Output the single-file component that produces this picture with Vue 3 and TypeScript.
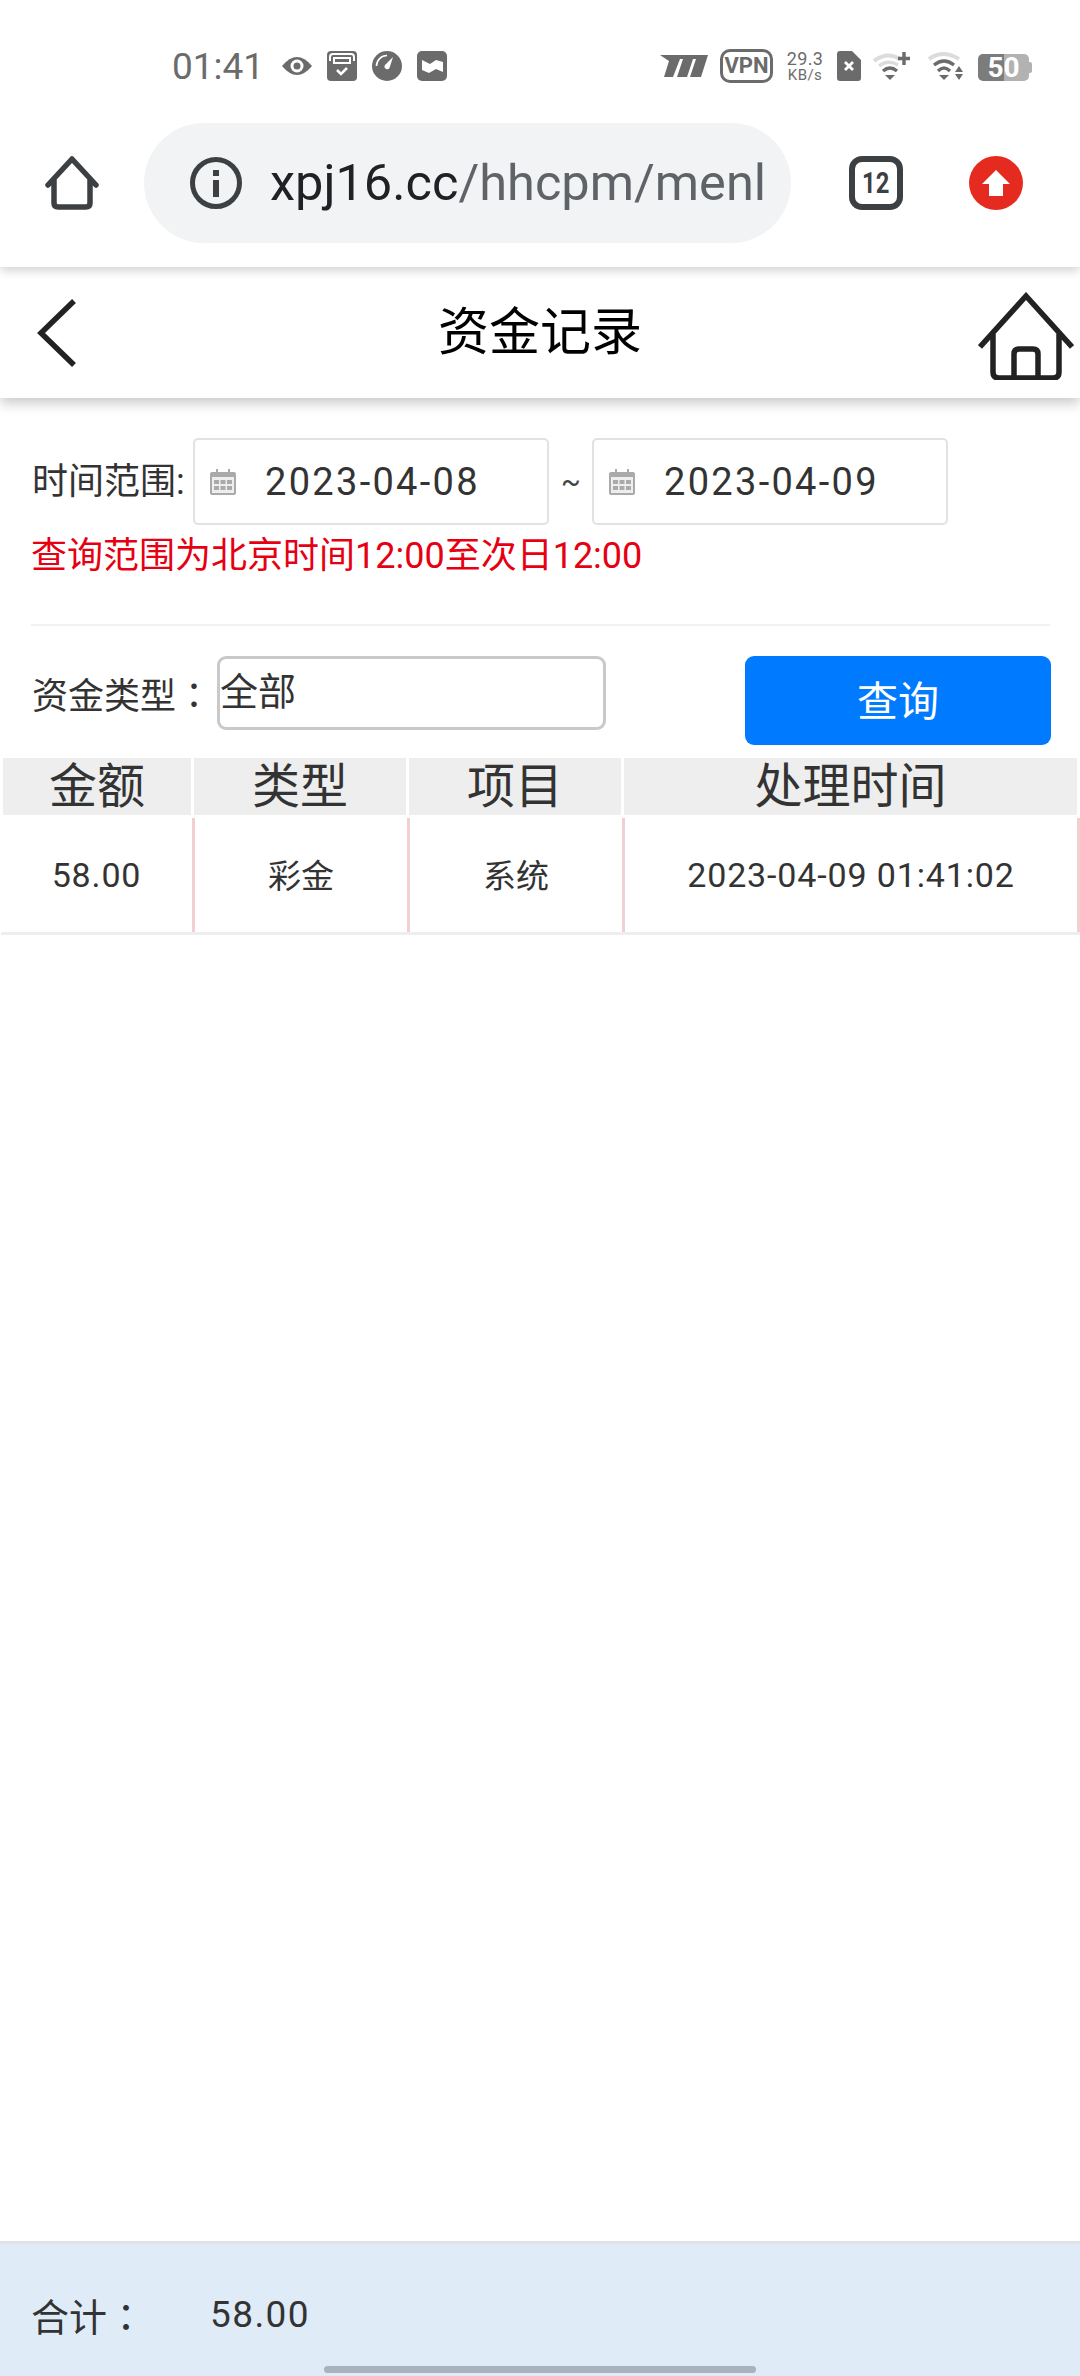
<script setup lang="ts">
interface RecordRow { amount: string; type: string; item: string; time: string }
const headers: string[] = ['金额', '类型', '项目', '处理时间']
const rows: RecordRow[] = [
  { amount: '58.00', type: '彩金', item: '系统', time: '2023-04-09 01:41:02' },
]
const dates: string[] = ['2023-04-08', '2023-04-09']
</script>

<template>
  <div class="page">
    <div class="status">
      <span class="clock">01:41</span>
      <svg class="s-eye" width="30" height="22" viewBox="0 0 30 22"><path d="M0 11Q15-7 30 11Q15 29 0 11Z" fill="#6b6b6b"/><circle cx="15" cy="11" r="6.5" fill="#fff"/><circle cx="15" cy="11" r="3.5" fill="#6b6b6b"/></svg>
      <svg class="s-note" width="30" height="30" viewBox="0 0 30 30"><rect width="30" height="30" rx="4" fill="#6b6b6b"/><path d="M3 10V6Q3 3 6 3H24Q27 3 27 6V10" fill="none" stroke="#fff" stroke-width="2"/><rect x="7" y="7" width="16" height="5" fill="none" stroke="#fff" stroke-width="2"/><path d="M10 19L14 23L20 17" fill="none" stroke="#fff" stroke-width="2.6"/></svg>
      <svg class="s-note" width="30" height="30" viewBox="0 0 30 30"><circle cx="15" cy="15" r="15" fill="#6b6b6b"/><path d="M4.5 15A10.5 10.5 0 0 1 15 4.5" fill="none" stroke="#fff" stroke-width="1.6"/><path d="M13 14L21 6L17.5 17A2.6 2.6 0 0 1 13 14Z" fill="#fff"/></svg>
      <svg class="s-note" width="30" height="30" viewBox="0 0 30 30"><rect width="30" height="30" rx="5" fill="#6b6b6b"/><path d="M5 9L13 13L19 9L26 11V21L19 18L12 22L5 19Z" fill="#fff"/></svg>

      <svg class="s-brand" width="48" height="22" viewBox="0 0 48 22"><path d="M0 0H48L41 22H30L36 4H33L27 22H17L23 4H20L13 22H4L9 6Z" fill="#6b6b6b"/></svg>
      <span class="s-vpn">VPN</span>
      <span class="s-speed"><b>29.3</b><i>KB/s</i></span>
      <svg class="s-sim" width="24" height="30" viewBox="0 0 24 30"><path d="M3 0H15L24 9V27Q24 30 21 30H3Q0 30 0 27V3Q0 0 3 0Z" fill="#6b6b6b"/><path d="M8 11L16 19M16 11L8 19" stroke="#fff" stroke-width="2.8"/></svg>
      <svg class="s-wifi1" width="37" height="28" viewBox="0 0 37 28"><path d="M1 9Q14-1 27 7" fill="none" stroke="#dcdcdc" stroke-width="4"/><path d="M6 14Q15 7 25 13" fill="none" stroke="#dcdcdc" stroke-width="3.4"/><path d="M10 19Q17 13 24 19" fill="none" stroke="#6b6b6b" stroke-width="3.4"/><path d="M12 23H22L17 28Z" fill="#6b6b6b"/><path d="M31 0V13M25 6.500H37" stroke="#6b6b6b" stroke-width="3.4"/></svg>
      <svg class="s-wifi2" width="35" height="28" viewBox="0 0 35 28"><path d="M1 7Q15-3 31 7" fill="none" stroke="#dcdcdc" stroke-width="4"/><path d="M6 13Q16 5 26 13" fill="none" stroke="#6b6b6b" stroke-width="3.4"/><path d="M10 19Q16 13 22 19" fill="none" stroke="#6b6b6b" stroke-width="3.4"/><path d="M11 23H21L16 28Z" fill="#6b6b6b"/><path d="M31 14L35 20H27Z M27 22H35L31 28Z" fill="#6b6b6b"/></svg>
      <span class="s-batt"><b>50</b></span>
    </div>

    <div class="toolbar">
      <svg class="tb-home" width="54" height="54" viewBox="0 0 54 54"><path d="M3 29L27 3L51 29M9 24V47Q9 51 13 51H41Q45 51 45 47V24" fill="none" stroke="#3c4043" stroke-width="5.500" stroke-linecap="round" stroke-linejoin="round"/></svg>
      <div class="pill">
        <svg class="info" width="52" height="52" viewBox="0 0 52 52"><circle cx="26" cy="26" r="23.500" fill="none" stroke="#3c4043" stroke-width="5"/><rect x="23" y="13" width="6" height="6" fill="#3c4043"/><rect x="23" y="23" width="6" height="17" fill="#3c4043"/></svg>
        <div class="url"><span class="host">xpj16.cc</span><span class="path">/hhcpm/menl</span></div>
      </div>
      <span class="tab-count"><span class="tab-num">12</span></span>
      <svg class="update" width="54" height="54" viewBox="0 0 54 54"><circle cx="27" cy="27" r="27" fill="#e52b20"/><path d="M27 14L41 28H34V40H20V28H13Z" fill="#fff"/></svg>
    </div>

    <header class="nav">
      <svg class="back" width="40" height="70" viewBox="0 0 40 70"><path d="M37 3L4 35L37 67" fill="none" stroke="#222" stroke-width="5.500"/></svg>
      <h1 class="title">资金记录</h1>
      <svg class="nav-home" width="96" height="88" viewBox="0 0 96 88"><path d="M2 55L48 4L94 55M15 42V80Q15 86 21 86H75Q81 86 81 80V42M36 85V62Q36 57 41 57H55Q60 57 60 62V85" fill="none" stroke="#222" stroke-width="5.500"/></svg>
    </header>

    <main class="content">
      <div class="range">
        <span class="label range-label">时间范围:</span>
        <template v-for="(d, i) in dates" :key="d">
          <span v-if="i === 1" class="tilde">~</span>
          <div class="date-box">
            <svg width="26" height="26" viewBox="0 0 26 26"><path d="M6 0H8V3H18V0H20V3H24Q26 3 26 5V24Q26 26 24 26H2Q0 26 0 24V5Q0 3 2 3H6Z" fill="#aaa"/><rect x="2" y="8" width="22" height="16" fill="#eee"/><g fill="#aaa"><rect x="4" y="11" width="5" height="4"/><rect x="10.500" y="11" width="5" height="4"/><rect x="17" y="11" width="5" height="4"/><rect x="4" y="17" width="5" height="4"/><rect x="10.500" y="17" width="5" height="4"/><rect x="17" y="17" width="5" height="4"/></g></svg>
            <span class="date-text">{{ d }}</span>
          </div>
        </template>
      </div>
      <p class="notice">查询范围为北京时间12:00至次日12:00</p>
      <div class="divider"></div>
      <div class="type-row">
        <span class="label type-label">资金类型<span class="colon">：</span></span>
        <div class="select">全部</div>
        <button class="query" type="button">查询</button>
      </div>

      <div class="thead">
        <div v-for="h in headers" :key="h" class="th">{{ h }}</div>
      </div>
      <div v-for="r in rows" :key="r.time" class="tr">
        <div class="td num">{{ r.amount }}</div>
        <div class="td">{{ r.type }}</div>
        <div class="td">{{ r.item }}</div>
        <div class="td num">{{ r.time }}</div>
      </div>
    </main>

    <footer class="total">
      <span class="total-label">合计<span class="colon">：</span></span>
      <span class="total-value">58.00</span>
    </footer>
    <div class="gesture"></div>
  </div>
</template>

<style>
html, body { margin: 0; background: #fff; }
</style>

<style scoped>
.page {
  position: relative;
  width: 1080px;
  height: 2376px;
  overflow: hidden;
  display: flex;
  flex-direction: column;
  background: #fff;
  color: #333;
  font-family: Roboto, "Noto Sans CJK SC", sans-serif;
}
.status {
  position: relative;
  z-index: 3;
  height: 123px;
  box-sizing: border-box;
  padding: 9px 0 0 172px;
  display: flex;
  align-items: center;
  color: #6b6b6b;
  background: #fff;
  flex: none;
}
.clock { font-size: 37px; width: 86px; }
.s-eye { margin-left: 24px; }
.s-note { margin-left: 15px; }
.s-brand { margin-left: 213px; }
.s-vpn {
  margin-left: 12px;
  width: 53px;
  height: 34px;
  box-sizing: border-box;
  border: 3px solid #6b6b6b;
  border-radius: 10px;
  font-size: 22px;
  font-weight: 700;
  line-height: 28px;
  text-align: center;
}
.s-speed {
  margin-left: 14px;
  width: 36px;
  display: flex;
  flex-direction: column;
  align-items: center;
  line-height: 1;
  white-space: nowrap;
}
.s-speed b { font-weight: 400; font-size: 18px; line-height: 18px; letter-spacing: 0.4px; }
.s-speed i { font-style: normal; font-size: 15px; line-height: 15px; letter-spacing: 0.4px; }
.s-sim { margin-left: 14px; }
.s-wifi1 { margin-left: 12px; }
.s-wifi2 { margin-left: 18px; }
.s-batt {
  margin-left: 15px;
  width: 51px;
  height: 27px;
  border-radius: 5px;
  margin-top: 3px;
  background: linear-gradient(90deg, #7c7c7c 0 50%, #b2b2b2 50% 100%);
  display: flex;
  align-items: center;
  justify-content: center;
  color: #fff;
  position: relative;
}
.s-batt::after {
  content: "";
  position: absolute;
  right: -3px;
  top: 8px;
  width: 3px;
  height: 11px;
  border-radius: 0 2px 2px 0;
  background: #b2b2b2;
}
.s-batt b { font-size: 28px; font-weight: 700; line-height: 27px; }

.toolbar {
  position: relative;
  z-index: 2;
  flex: none;
  height: 144px;
  display: flex;
  align-items: flex-start;
  padding-left: 45px;
  background: #fff;
  box-shadow: 0 3px 10px rgba(0, 0, 0, 0.2);
}
.tb-home { margin-top: 33px; }
.pill {
  margin-left: 45px;
  width: 647px;
  height: 120px;
  box-sizing: border-box;
  border-radius: 60px;
  background: #f1f3f4;
  padding-left: 46px;
  display: flex;
  align-items: center;
}
.info { flex: none; }
.url {
  margin-left: 28px;
  width: 500px;
  white-space: nowrap;
  font-size: 50.5px;
  line-height: 62px;
}
.host { color: #202124; }
.path { color: #5f6368; }
.tab-count {
  margin: 33px 0 0 58px;
  width: 54px;
  height: 54px;
  box-sizing: border-box;
  border: 6px solid #3c4043;
  border-radius: 13px;
  display: flex;
  align-items: center;
  justify-content: center;
  color: #3c4043;
}
.tab-num {
  display: inline-block;
  font-size: 29px;
  font-weight: 700;
  line-height: 1;
  transform: scaleX(0.82);
}
.update { margin: 33px 0 0 66px; }

.nav {
  position: relative;
  z-index: 1;
  flex: none;
  height: 131px;
  display: grid;
  grid-template-columns: 1fr auto 1fr;
  align-items: center;
  background: #fff;
  box-shadow: 0 5px 12px rgba(0, 0, 0, 0.22);
}
.back { margin-left: 37px; margin-top: 1px; }
.title {
  margin: 1px 0 0;
  font-size: 51px;
  font-weight: 400;
  color: #000;
  line-height: 60px;
}
.nav-home { justify-self: end; margin-right: 6px; margin-top: 7px; }

.content { flex: 1; min-height: 0; padding-top: 40px; }
.range {
  display: flex;
  align-items: center;
  padding-left: 32px;
}
.label { font-size: 36px; line-height: 40px; color: #333; white-space: nowrap; }
.range-label { width: 161px; flex: none; }
.colon { font-family: "Noto Sans CJK TC", sans-serif; }
.date-box {
  width: 356px;
  height: 87px;
  box-sizing: border-box;
  border: 2.500px solid #e2e2e2;
  border-radius: 5px;
  padding-left: 15px;
  display: flex;
  align-items: center;
}
.tilde { font-size: 29px; color: #444; width: 31px; margin-left: 12px; }
.date-text {
  margin-left: 29px;
  font-size: 38px;
  letter-spacing: 2.3px;
  color: #333;
}
.notice {
  margin: 11px 0 0;
  padding-left: 31px;
  font-size: 36px;
  line-height: 40px;
  color: #e60012;
}
.divider {
  margin: 48px 0 0 31px;
  width: 1019px;
  height: 2px;
  background: #f2f2f2;
}
.type-row {
  margin-top: 30px;
  height: 89px;
  padding-left: 32px;
  display: flex;
  align-items: flex-start;
}
.type-label {
  width: 185px;
  line-height: 74px;
}
.select {
  width: 389px;
  height: 74px;
  box-sizing: border-box;
  border: 3px solid #c9c9c9;
  border-radius: 9px;
  font-size: 38px;
  line-height: 67px;
  color: #333;
}
.query {
  margin-left: 139px;
  width: 306px;
  height: 89px;
  border: none;
  border-radius: 9px;
  background: #007aff;
  color: #fff;
  font-family: inherit;
  font-size: 41px;
  padding: 0 0 6px;
}
.thead {
  margin-top: 13px;
  padding-left: 3px;
  display: grid;
  grid-template-columns: 188px 212px 212px 453px;
  column-gap: 3px;
}
.th {
  height: 57px;
  background: #eee;
  text-align: center;
  font-size: 48px;
  line-height: 58px;
  color: #333;
}
.tr {
  margin-top: 3px;
  height: 117px;
  box-sizing: border-box;
  display: grid;
  grid-template-columns: 194px 215px 215px 455px;
  border-bottom: 3px solid #eee;
  margin-left: 1px;
}
.td {
  border-right: 3px solid #f2cfd3;
  display: flex;
  align-items: center;
  justify-content: center;
  font-size: 33px;
  color: #333;
  padding-bottom: 3px;
}
.td.num { font-size: 34px; letter-spacing: 0.86px; padding-bottom: 0; }
.total {
  flex: none;
  height: 135px;
  box-sizing: border-box;
  border-top: 3px solid #dfe2e6;
  background: #e0ebf8;
  padding: 28px 0 20px 31px;
  display: flex;
  align-items: center;
}
.total-label { width: 179px; font-size: 38px; color: #333; }
.total-value { font-size: 37px; letter-spacing: 1.4px; color: #333; }
.gesture {
  position: absolute;
  left: 324px;
  bottom: 3px;
  width: 432px;
  height: 7px;
  border-radius: 4px;
  background: #a9b2bd;
}
</style>
